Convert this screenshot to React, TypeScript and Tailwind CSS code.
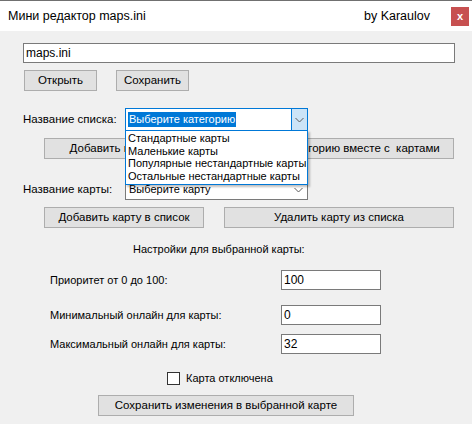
import { ReactNode } from "react";

const font = { fontFamily: '"Liberation Sans", Arial, sans-serif' };

function WinButton({ className, children }: { className: string; children: ReactNode }) {
  return (
    <button
      className={`h-[21px] shrink-0 border border-[#adadad] bg-[#e1e1e1] text-[11.5px] leading-none text-black flex items-center justify-center whitespace-nowrap ${className}`}
    >
      {children}
    </button>
  );
}

function Chevron() {
  return (
    <svg width="9" height="6" viewBox="0 0 9 6" className="shrink-0">
      <path d="M0.5 1 L4.5 5 L8.5 1" fill="none" stroke="#5a5a5a" strokeWidth="1" />
    </svg>
  );
}

function TextBox({ value }: { value: string }) {
  return (
    <div className="w-[100px] h-[20px] shrink-0 border border-[#7a7a7a] bg-white flex items-center px-[2px] text-[12px]">
      {value}
    </div>
  );
}

const categories = [
  "Стандартные карты",
  "Маленькие карты",
  "Популярные нестандартные карты",
  "Остальные нестандартные карты",
];

export default function App() {
  return (
    <div className="w-[472px] h-[424px] overflow-hidden border-t border-[#707070] bg-[#f0f0f0] text-black" style={font}>
      {/* Title bar */}
      <div className="h-[30px] bg-white flex items-center pl-[8px] pr-[3px] text-[12.5px]">
        <span>Мини редактор maps.ini</span>
        <span className="ml-auto mr-[21px]">by Karaulov</span>
        <div className="w-[18px] h-[19px] bg-[#c75050] text-white text-[11px] font-bold flex items-center justify-center leading-none">
          x
        </div>
      </div>

      <div className="flex flex-col">
        {/* File path */}
        <div className="mt-[12px] ml-[23px] w-[432px] h-[20px] border border-[#7a7a7a] bg-white flex items-center px-[2px] text-[12px]">
          maps.ini
        </div>

        <div className="mt-[7px] ml-[24px] flex gap-[19px]">
          <WinButton className="w-[73px]">Открыть</WinButton>
          <WinButton className="w-[73px]">Сохранить</WinButton>
        </div>

        {/* Category combobox with open list */}
        <div className="mt-[17px] ml-[23px] flex items-center h-[23px] relative">
          <span className="w-[102px] text-[11.5px]">Название списка:</span>
          <div className="w-[183px] h-[23px] border border-[#0078d7] bg-white flex items-stretch">
            <div className="flex-1 flex items-center pl-[2px]">
              <span className="bg-[#0078d7] text-white text-[11px] leading-[15px] px-[1px]">Выберите категорию</span>
            </div>
            <div className="w-[16px] bg-[#cce4f7] border-l border-[#0078d7] flex items-center justify-center">
              <Chevron />
            </div>
          </div>
          <div className="absolute left-[102px] top-[22px] w-[183px] border border-[#0078d7] bg-white pl-[2px] pt-[1px] pb-[2px] text-[11px] leading-[12.5px] shadow-[2px_2px_2px_rgba(0,0,0,0.25)] z-10">
            {categories.map((c) => (
              <div key={c} className="whitespace-nowrap">
                {c}
              </div>
            ))}
          </div>
        </div>

        <div className="mt-[7px] ml-[44px] flex gap-[20px]">
          <WinButton className="w-[160px]">Добавить категорию</WinButton>
          <WinButton className="w-[230px]">Удалить категорию вместе с&nbsp; картами</WinButton>
        </div>

        {/* Map combobox */}
        <div className="mt-[20px] ml-[23px] flex items-center h-[21px]">
          <span className="w-[102px] text-[11.5px]">Название карты:</span>
          <div className="w-[183px] h-[21px] border border-[#7a7a7a] bg-white flex items-center pl-[3px] pr-[4px] text-[11px]">
            <span className="flex-1">Выберите карту</span>
            <Chevron />
          </div>
        </div>

        <div className="mt-[7px] ml-[44px] flex gap-[20px]">
          <WinButton className="w-[160px]">Добавить карту в список</WinButton>
          <WinButton className="w-[230px]">Удалить карту из списка</WinButton>
        </div>

        {/* Selected map settings */}
        <div className="mt-[14px] ml-[133px] text-[11px] leading-[14px]">Настройки для выбранной карты:</div>

        <div className="mt-[14px] ml-[50px] flex items-center">
          <span className="w-[231px] text-[11px]">Приоритет от 0 до 100:</span>
          <TextBox value="100" />
        </div>
        <div className="mt-[15px] ml-[50px] flex items-center">
          <span className="w-[231px] text-[11px]">Минимальный онлайн для карты:</span>
          <TextBox value="0" />
        </div>
        <div className="mt-[9px] ml-[50px] flex items-center">
          <span className="w-[231px] text-[11px]">Максимальный онлайн для карты:</span>
          <TextBox value="32" />
        </div>

        <div className="mt-[18px] ml-[167px] h-[13px] flex items-center gap-[6px]">
          <div className="w-[13px] h-[13px] border border-[#333333] bg-white" />
          <span className="text-[11px] leading-none">Карта отключена</span>
        </div>

        <div className="mt-[10px] ml-[98px]">
          <WinButton className="w-[256px]">Сохранить изменения в выбранной карте</WinButton>
        </div>
      </div>
    </div>
  );
}
